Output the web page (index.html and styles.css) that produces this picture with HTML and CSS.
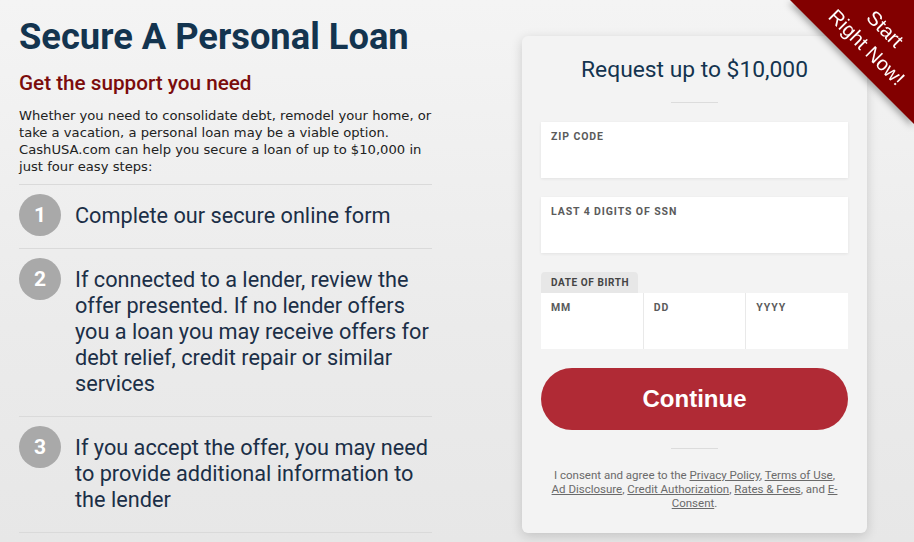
FILE: index.html
```html
<!DOCTYPE html>
<html lang="en">
<head>
<meta charset="utf-8">
<title>Secure A Personal Loan</title>
<link rel="stylesheet" href="styles.css">
</head>
<body>
<div class="page">
  <section class="intro">
    <h1 class="title">Secure A Personal Loan</h1>
    <h2 class="subtitle">Get the support you need</h2>
    <p class="lead">Whether you need to consolidate debt, remodel your home, or take a vacation, a personal loan may be a viable option. CashUSA.com can help you secure a loan of up to $10,000 in just four easy steps:</p>
    <ol class="steps">
      <li class="step"><span class="num">1</span><span class="step-text">Complete our secure online form</span></li>
      <li class="step"><span class="num">2</span><span class="step-text">If connected to a lender, review the offer presented. If no lender offers you a loan you may receive offers for debt relief, credit repair or similar services</span></li>
      <li class="step"><span class="num">3</span><span class="step-text">If you accept the offer, you may need to provide additional information to the lender</span></li>
    </ol>
  </section>

  <form class="card">
    <h3 class="card-title">Request up to $10,000</h3>
    <div class="rule"></div>
    <label class="field"><span class="field-label">ZIP CODE</span></label>
    <label class="field"><span class="field-label">LAST 4 DIGITS OF SSN</span></label>
    <div class="dob">
      <div class="dob-tab">DATE OF BIRTH</div>
      <div class="dob-row">
        <label class="field dob-field"><span class="field-label">MM</span></label>
        <label class="field dob-field"><span class="field-label">DD</span></label>
        <label class="field dob-field"><span class="field-label">YYYY</span></label>
      </div>
    </div>
    <button type="button" class="continue">Continue</button>
    <div class="rule rule-bottom"></div>
    <p class="consent">I consent and agree to the <a href="#">Privacy Policy</a>, <a href="#">Terms of Use</a>, <a href="#">Ad Disclosure</a>, <a href="#">Credit Authorization</a>, <a href="#">Rates &amp; Fees</a>, and <a href="#">E-Consent</a>.</p>
  </form>

  <div class="ribbon">
    <div class="ribbon-bg"></div>
    <div class="ribbon-text">Start<br>Right Now!</div>
  </div>
</div>
</body>
</html>
```

FILE: styles.css
```css
* { box-sizing: border-box; }

html, body {
  margin: 0;
  padding: 0;
}

body {
  width: 914px;
  height: 542px;
  overflow: hidden;
  background: linear-gradient(180deg, #f4f4f4 0%, #ebebeb 60%, #e7e7e7 100%);
  font-family: Roboto, "Liberation Sans", sans-serif;
}

.page {
  position: relative;
  display: flex;
  gap: 90px;
  padding-left: 19px;
  height: 542px;
}

.intro {
  width: 413px;
  flex: none;
}

.title {
  margin: 15px 0 0;
  font: 700 36.3px/43px Roboto, sans-serif;
  color: #13344f;
}

.subtitle {
  margin: 13px 0 0;
  font: 500 20.7px/24px Roboto, sans-serif;
  color: #7b0c0c;
}

.lead {
  margin: 12px 0 0;
  font: 13.15px/17px "DejaVu Sans", Verdana, sans-serif;
  color: #222;
}

.steps {
  list-style: none;
  margin: 9px 0 0;
  padding: 0;
  border-top: 1px solid #dadada;
}

.step {
  display: flex;
  align-items: flex-start;
  gap: 14px;
  padding: 9px 0 19px;
  border-bottom: 1px solid #dadada;
}

.num {
  flex: none;
  width: 42px;
  height: 42px;
  margin-bottom: -8px;
  border-radius: 50%;
  background: #a9a9a9;
  color: #fff;
  font: 700 21px/42px Roboto, sans-serif;
  text-align: center;
}

.step-text {
  margin-top: 9px;
  font: 400 21.7px/26px Roboto, sans-serif;
  color: #1b2f47;
}

/* Card */
.card {
  flex: none;
  width: 345px;
  height: 497px;
  margin: 36px 0 0;
  padding: 21px 19px 0;
  background: #f3f3f3;
  border-radius: 6px;
  box-shadow: 0 3px 12px rgba(0, 0, 0, 0.16);
  display: flex;
  flex-direction: column;
}

.card-title {
  margin: 0;
  font: 400 22.8px/26px Roboto, sans-serif;
  color: #13344f;
  text-align: center;
}

.rule {
  width: 47px;
  height: 1px;
  background: #dcdcdc;
  margin: 19px auto 19px;
  flex: none;
}

.field {
  display: block;
  height: 56px;
  background: #fff;
  box-shadow: 0 1px 3px rgba(0, 0, 0, 0.07);
  padding: 9px 10px 0;
  margin-bottom: 19px;
}

.field-label {
  display: block;
  font: 700 10.5px/12px Roboto, sans-serif;
  letter-spacing: 0.9px;
  color: #5b5b5b;
}

.dob {
  margin-bottom: 19px;
}

.dob-tab {
  display: inline-block;
  height: 21px;
  width: 97px;
  padding: 1px 0 0 10px;
  background: #e7e7e7;
  border-radius: 4px 4px 0 0;
  font: 700 10px/20px Roboto, sans-serif;
  letter-spacing: 0.6px;
  color: #444;
  vertical-align: top;
}

.dob-row {
  display: grid;
  grid-template-columns: 1fr 1fr 1fr;
  gap: 1px;
  background: #e9e9e9;
}

.dob-field {
  margin: 0;
  box-shadow: none;
}

.continue {
  display: block;
  width: 100%;
  height: 62px;
  border: 0;
  border-radius: 31px;
  background: #b02a35;
  color: #fff;
  font: 700 24px/62px "Liberation Sans", Arial, sans-serif;
  padding: 0;
  cursor: pointer;
}

.rule-bottom {
  margin: 18px auto 19px;
}

.consent {
  margin: 0;
  padding: 0 8px;
  font: 400 11.5px/14px Roboto, sans-serif;
  color: #6a6a6a;
  text-align: center;
}

.consent a {
  color: #6a6a6a;
  text-decoration: underline;
}

/* Corner ribbon */
.ribbon {
  position: absolute;
  top: 0;
  right: 0;
  width: 124px;
  height: 124px;
  filter: drop-shadow(-2px 3px 3px rgba(0, 0, 0, 0.3));
}

.ribbon-bg {
  width: 100%;
  height: 100%;
  background: #820000;
  clip-path: polygon(0 0, 100% 0, 100% 100%);
}

.ribbon-text {
  position: absolute;
  left: 86px;
  top: 38px;
  width: 130px;
  margin-left: -65px;
  margin-top: -26px;
  transform: rotate(45deg);
  font: 400 20px/26px "Liberation Sans", Arial, sans-serif;
  color: #fff;
  text-align: center;
}
```
